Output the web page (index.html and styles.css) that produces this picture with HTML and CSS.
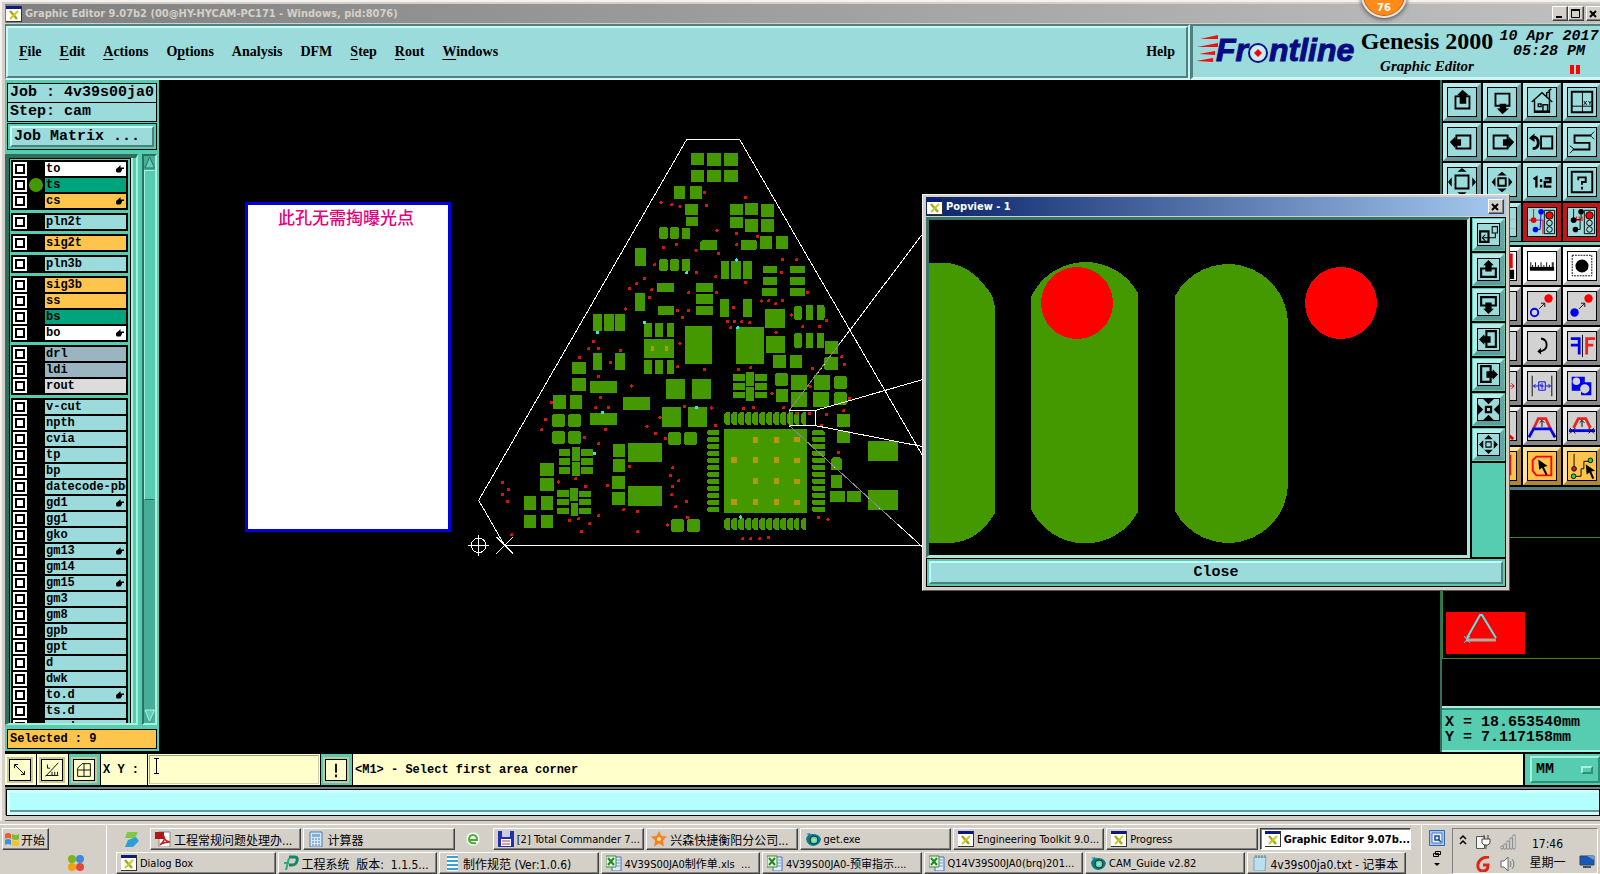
FILE: index.html
```
<!DOCTYPE html>
<html lang="en">
<head>
  <meta charset="UTF-8" />
  <meta name="viewport" content="width=device-width, initial-scale=1.0"/>
  <title>Graphic Editor 9.07b2</title>

  <link rel="stylesheet" href="styles.css">
</head>
<body>

  <!-- shared icons -->
  <svg class="defs" aria-hidden="true">
    <symbol id="xwin" viewBox="0 0 16 16"><path d="M0 0h16v16H0z" fill="#333"/><path d="M0 0h15v3H0z" fill="#0a1a80"/><path d="M0 3h15v12H0z" fill="#fff"/><path d="M4 5l7 8" stroke="#a8a820" stroke-width="2.500"/><path d="M12 5l-8 8" stroke="#c8c828" stroke-width="2"/></symbol>
    <symbol id="hand" viewBox="0 0 8 8"><path d="M0 4l2-1.500L4.500 0v2.500H8v1.500H6v1L4.500 7.500H1L0 6.500z"/></symbol>
    <symbol id="excel" viewBox="0 0 16 16"><path d="M6 2h9v14H6z" fill="#dfeafc" stroke="#4a73b8"/><path d="M10 5h4M10 8h4M10 11h4" stroke="#7da0d8"/><path d="M0 1h10v11H0z" fill="#e8f5e0" stroke="#3c8c3c"/><path d="M2 3l6 7M8 3l-6 7" stroke="#23862b" stroke-width="2"/></symbol>
    <symbol id="eye" viewBox="0 0 16 16"><path d="M1 3l4-1 1 3z" fill="#1797a5"/><path d="M1 8q1-5 7-5t8 5q-1 6-8 7-6-1-7-7z" fill="#087b87"/><circle cx="9" cy="9" r="4" fill="#4be0d0" stroke="#123"/><circle cx="9" cy="9" r="1.500" fill="#e8e030"/></symbol>
    <symbol id="up" viewBox="0 0 30 30"><path d="M8 9h15v13H8z" fill="none" stroke="#000" stroke-width="2"/><path d="M15.500 2l-6 6h3v9h7V8h3z"/></symbol>
    <symbol id="down" viewBox="0 0 30 30"><path d="M8 6h15v13H8z" fill="none" stroke="#000" stroke-width="2"/><path d="M15.500 28l-6-6h3v-5h7v5h3z"/></symbol>
    <symbol id="left" viewBox="0 0 30 30"><path d="M9 8h15v14H9z" fill="none" stroke="#000" stroke-width="2"/><path d="M2 15l6-6v3h6v7H8v3z"/></symbol>
    <symbol id="right" viewBox="0 0 30 30"><path d="M6 8h15v14H6z" fill="none" stroke="#000" stroke-width="2"/><path d="M28 15l-6-6v3h-6v7h6v3z"/></symbol>
    <symbol id="zoomout" viewBox="0 0 30 30"><path d="M8 8h14v14H8z" fill="none" stroke="#000" stroke-width="2"/><path d="M10 4h10l-5-4zM10 26h10l-5 4zM4 10v10l-4-5zM26 10v10l4-5z"/></symbol>
    <symbol id="zoomin" viewBox="0 0 30 30"><path d="M11 11h8v8h-8z" fill="none" stroke="#000" stroke-width="2"/><path d="M10 8h10l-5-4zM10 22h10l-5 4zM8 10v10l-4-5zM22 10v10l4-5z"/></symbol>
    <symbol id="popup-up" viewBox="0 0 20 20"><path d="M3 9h14v8H3z" fill="none" stroke="#000" stroke-width="2"/><path d="M10 1L5 6h2v6h6V6h2z"/></symbol>
    <symbol id="popup-in" viewBox="0 0 20 20"><path d="M7.500 7.500h5v5h-5z" fill="none" stroke="#000"/><path d="M6 5h8l-4-4zM6 15h8l-4 4zM5 6v8l-4-4zM15 6v8l4-4z"/></symbol>
  </svg>

  <div class="window">
    <div class="titlebar">
      <svg class="ico"><use href="#xwin"/></svg>
      <span class="title">Graphic Editor 9.07b2 (00@HY-HYCAM-PC171 - Windows, pid:8076)</span>
      <button class="winbtn" aria-label="Minimize"><svg width="12" height="12"><path d="M3 9h6" stroke="#000" stroke-width="2"/></svg></button>
      <button class="winbtn" aria-label="Maximize"><svg width="12" height="12"><path d="M2.500 2.500h8v7h-8z" fill="none" stroke="#000" stroke-width="1"/><path d="M2 2h9" stroke="#000" stroke-width="2"/></svg></button>
      <button class="winbtn last" aria-label="Close window"><svg width="12" height="12"><path d="M3 3l6 6M9 3l-6 6" stroke="#000" stroke-width="2"/></svg></button>
    </div>
    <div class="badge">76</div>

    <div class="header">
      <div class="menuframe">
        <nav class="menu">
          <a href="#"><u>F</u>ile</a>
          <a href="#"><u>E</u>dit</a>
          <a href="#"><u>A</u>ctions</a>
          <a href="#">O<u>p</u>tions</a>
          <a href="#">Analysis</a>
          <a href="#">DFM</a>
          <a href="#"><u>S</u>tep</a>
          <a href="#"><u>R</u>out</a>
          <a href="#"><u>W</u>indows</a>
          <a href="#" class="help">Help</a>
        </nav>
      </div>
      <div class="brand">
        <svg class="logo" viewBox="0 0 162 44">
          <path d="M4 9l18-4v4zM1 17l21-4v4zM3 24l16-3v4zM0 31l17-3v4z" fill="#f01010"/>
          <text x="20" y="31">Fr</text>
          <circle cx="62" cy="23" r="9" fill="#c8eef4" stroke="#101080" stroke-width="2"/>
          <path d="M62 19l4 4-4 4-4-4z" fill="#f00"/>
          <text x="73" y="31">ntline</text>
        </svg>
        <div class="product">
          <div class="genesis">Genesis 2000</div>
          <div class="sub">Graphic Editor</div>
        </div>
        <div class="clock">
          <div>10 Apr 2017</div>
          <div>05:28 PM</div>
          <svg class="pause" width="10" height="9"><path d="M0 0h4v9H0zM6 0h4v9H6z" fill="#f00"/></svg>
        </div>
      </div>
    </div>

    <div class="main">
      <aside class="side">
        <div class="jobline">Job : 4v39s00ja0</div>
        <div class="jobline">Step: cam</div>
        <div class="matrix"><button class="matrixbtn">Job Matrix ...</button></div>
        <div class="listwrap">
          <div class="listframe"><div class="list">
            <div class="group">
              <div class="layer"><input type="checkbox" id="l1"><i></i><label class="white" for="l1">to<svg><use href="#hand"/></svg></label></div>
              <div class="layer"><input type="checkbox" id="l2"><i class="on"></i><label class="green" for="l2">ts</label></div>
              <div class="layer"><input type="checkbox" id="l3"><i></i><label class="gold" for="l3">cs<svg><use href="#hand"/></svg></label></div>
            </div>
            <div class="group"><div class="layer"><input type="checkbox" id="l4"><i></i><label for="l4">pln2t</label></div></div>
            <div class="group"><div class="layer"><input type="checkbox" id="l5"><i></i><label class="gold" for="l5">sig2t</label></div></div>
            <div class="group"><div class="layer"><input type="checkbox" id="l6"><i></i><label for="l6">pln3b</label></div></div>
            <div class="group">
              <div class="layer"><input type="checkbox" id="l7"><i></i><label class="gold" for="l7">sig3b</label></div>
              <div class="layer"><input type="checkbox" id="l8"><i></i><label class="gold" for="l8">ss</label></div>
              <div class="layer"><input type="checkbox" id="l9"><i></i><label class="green" for="l9">bs</label></div>
              <div class="layer"><input type="checkbox" id="l10"><i></i><label class="white" for="l10">bo<svg><use href="#hand"/></svg></label></div>
            </div>
            <div class="group">
              <div class="layer"><input type="checkbox" id="l11"><i></i><label class="slate" for="l11">drl</label></div>
              <div class="layer"><input type="checkbox" id="l12"><i></i><label class="slate" for="l12">ldi</label></div>
              <div class="layer"><input type="checkbox" id="l13"><i></i><label class="grey" for="l13">rout</label></div>
            </div>
            <div class="group">
              <div class="layer"><input type="checkbox" id="l14"><i></i><label for="l14">v-cut</label></div>
              <div class="layer"><input type="checkbox" id="l15"><i></i><label for="l15">npth</label></div>
              <div class="layer"><input type="checkbox" id="l16"><i></i><label for="l16">cvia</label></div>
              <div class="layer"><input type="checkbox" id="l17"><i></i><label for="l17">tp</label></div>
              <div class="layer"><input type="checkbox" id="l18"><i></i><label for="l18">bp</label></div>
              <div class="layer"><input type="checkbox" id="l19"><i></i><label for="l19">datecode-pbo</label></div>
              <div class="layer"><input type="checkbox" id="l20"><i></i><label for="l20">gd1<svg><use href="#hand"/></svg></label></div>
              <div class="layer"><input type="checkbox" id="l21"><i></i><label for="l21">gg1</label></div>
              <div class="layer"><input type="checkbox" id="l22"><i></i><label for="l22">gko</label></div>
              <div class="layer"><input type="checkbox" id="l23"><i></i><label for="l23">gm13<svg><use href="#hand"/></svg></label></div>
              <div class="layer"><input type="checkbox" id="l24"><i></i><label for="l24">gm14</label></div>
              <div class="layer"><input type="checkbox" id="l25"><i></i><label for="l25">gm15<svg><use href="#hand"/></svg></label></div>
              <div class="layer"><input type="checkbox" id="l26"><i></i><label for="l26">gm3</label></div>
              <div class="layer"><input type="checkbox" id="l27"><i></i><label for="l27">gm8</label></div>
              <div class="layer"><input type="checkbox" id="l28"><i></i><label for="l28">gpb</label></div>
              <div class="layer"><input type="checkbox" id="l29"><i></i><label for="l29">gpt</label></div>
              <div class="layer"><input type="checkbox" id="l30"><i></i><label for="l30">d</label></div>
              <div class="layer"><input type="checkbox" id="l31"><i></i><label for="l31">dwk</label></div>
              <div class="layer"><input type="checkbox" id="l32"><i></i><label for="l32">to.d<svg><use href="#hand"/></svg></label></div>
              <div class="layer"><input type="checkbox" id="l33"><i></i><label for="l33">ts.d</label></div>
              <div class="layer"><input type="checkbox" id="l34"><i></i><label for="l34">cs.d</label></div>
            </div>
          </div></div>
          <div class="scroll">
            <svg width="11" height="14"><path d="M5.500 1l5 11H1z" fill="#5fd0b8" stroke="#2b6f60"/></svg>
            <div class="thumb"></div>
            <div class="trough"></div>
            <svg width="11" height="14"><path d="M5.500 12l5-11H1z" fill="#5fd0b8" stroke="#b0f0e0"/></svg>
          </div>
        </div>
        <div class="selected">Selected : 9</div>
      </aside>

      <div class="canvas">
        <svg class="board" viewBox="159 80 1281 672" preserveAspectRatio="xMinYMin meet">
          <path d="M246.500 203.500h203v327h-203z" fill="#fff" stroke="#0000e0" stroke-width="3"/>
          <text class="note" x="278" y="224">此孔无需掏曝光点</text>
          <!-- board drawing, three units to a pixel -->
          <svg x="450" y="130" width="480" height="440" viewBox="-60 0 1440 1320" shape-rendering="crispEdges">
            <g fill="#449800">
              <path d="M663 69h39v36h-39zM711 69h42v38h-42zM762 69h41v38h-41zM663 120h39v35h-39zM711 120h42v35h-42zM762 120h41v35h-41zM612 168h33v40h-33zM660 168h36v39h-36zM645 222h39v33h-39zM648 261h36v27h-36zM780 222h39v33h-39zM825 219h39v36h-39zM873 222h38v38h-38zM780 261h39v33h-39zM825 267h39v39h-39zM873 267h38v40h-38z"/>
              <path d="M571 291h19l4 4v27l-4 4h-19l-4-4v-27zM604 291h19l4 4v27l-4 4h-19l-4-4v-27zM636 294h24v32h-24zM697 330h44v30h-51v-22zM813 330h44l4 4v22l-4 4h-44zM870 318h36v38h-36zM918 318h36v38h-36zM495 354h33v54h-33zM571 387h19l4 4v27l-4 4h-19l-4-4v-27zM604 387h19l4 4v27l-4 4h-19l-4-4v-27zM636 387h24v36h-24zM753 393h24v54h-24zM783 393h30v54h-30zM819 393h27v54h-27z"/>
              <path d="M879 408h42v21h-42zM879 441h42v24h-42zM876 474h45v24h-45zM960 408h45v21h-45zM960 441h45v24h-45zM960 474h45v24h-45zM561 459h51v27h-51zM678 459h51v27h-51zM678 492h51v30h-51zM678 528h51v27h-51zM564 528h48v27h-48zM495 489h30v54h-30zM750 507h27v54h-27zM819 507h27v54h-27zM885 537h61v57h-61z"/>
              <path d="M976 528h16l4 4v34l-4 4h-16l-4-4v-34zM1008 525h21v45h-21zM1041 525h20l4 8v29l-4 8h-20zM369 552h27v50h-27zM402 552h30v50h-30zM435 552h30v50h-30zM522 579h24v42h-24zM555 579h24v42h-24zM591 579h21v42h-21zM522 627h90v57h-90zM645 588h81v114h-81zM798 591h85v111h-85zM888 618h57v51h-57zM976 609h16l4 4v37l-4 4h-16l-4-4v-37zM1008 609h21v45h-21zM1041 609h21v45h-21zM1065 633h39v38h-39z"/>
            </g>
            <path class="dots red" d="M573 218h0M606 225h0M630 229h0M704 187h0M710 227h0M826 203h0M741 302h0M799 310h0M862 320h0M801 345h0M745 371h0M581 352h0M619 344h0M678 361h0M555 405h0M680 427h0M524 445h0M738 441h0M501 462h0M478 475h0M546 480h0M538 503h0M657 489h0M739 487h0M826 457h0M934 427h0M937 389h0M981 390h0M1013 487h0M874 513h0M897 513h0M918 522h0M937 511h0M466 537h0M623 541h0M656 541h0M638 562h0M790 533h0M772 575h0M794 575h0M816 576h0M840 579h0M783 594h0M964 555h0M1069 571h0M1048 589h0M999 591h0M918 607h0"/>
            <path class="dots cyan" d="M651 429h0M799 390h0M523 578h0M383 607h0M804 594h0"/>
            <g transform="translate(0 630)">
              <g fill="#449800">
                <path d="M369 39h27v51h-27zM435 39h30v51h-30zM522 60h24v42h-24zM555 60h24v42h-24zM591 60h21v42h-21zM306 66h41v35h-41zM306 114h41v38h-41zM360 123h80v36h-80zM249 165h39v41h-39zM300 165h36v41h-36zM459 171h80v38h-80zM360 219h80v36h-80zM588 117h57v60h-57zM666 117h57v60h-57zM576 201h57v61h-57zM654 201h57v61h-57z"/>
                <path d="M598 276h31l4 4v30l-4 4h-31l-4-4v-30zM646 276h31l4 4v30l-4 4h-31l-4-4v-30zM250 222h31l4 4v31l-4 4h-31l-4-4v-31zM298 222h31l4 4v31l-4 4h-31l-4-4v-31zM250 273h31l4 4v30l-4 4h-31l-4-4v-30zM298 273h31l4 4v30l-4 4h-31l-4-4v-30zM909 45h39v39h-39zM960 45h36v39h-36zM1062 55l4-4h38v39h-38l-4-4z"/>
                <path d="M789 102h36v21h-36zM789 129h36v21h-36zM789 156h36v18h-36zM828 96h24v42h-24zM828 141h24v42h-24zM855 102h36v21h-36zM855 129h36v21h-36zM855 156h36v18h-36zM919 99h31l4 4v30l-4 4h-31l-4-4v-30zM918 147h36v39h-36zM963 105h48v45h-48zM1032 105h48v45h-48zM1096 108h31l4 4v31l-4 4h-31l-4-4v-31zM963 156h48v45h-48zM1029 156h48v45h-48zM1096 156h31l4 4v31l-4 4h-31l-4-4v-31z"/>
                <path d="M762 267h249v252h-249zM1101 222h39v39h-39zM1101 273h39v36h-39zM1194 303h90v60h-90zM1194 450h90v60h-90zM1083 359l8-8h18l7 8v31h-33zM1083 405h33v39h-33zM1080 453h45v33h-45zM1131 453h42v33h-42zM429 312h36v39h-36zM429 357h36v39h-36zM426 408h39v39h-39zM426 456h39v39h-39zM474 309h101v57h-101zM474 438h101v60h-101z"/>
                <path d="M267 327h33v21h-33zM267 354h33v21h-33zM267 381h33v21h-33zM306 321h24v42h-24zM306 366h24v42h-24zM333 327h36v21h-36zM333 354h36v21h-36zM333 381h36v21h-36zM210 369h42v39h-42zM210 414h42v39h-42zM162 468h36v42h-36zM213 468h36v42h-36zM162 525h36v39h-36zM213 525h36v39h-36zM261 450h36v21h-36zM261 477h36v18h-36zM261 504h36v18h-36zM300 444h24v39h-24zM303 488h21v40h-21zM327 453h36v18h-36zM327 477h36v18h-36zM327 504h36v18h-36zM607 537h31l4 4v31l-4 4h-31l-4-4v-31zM655 537h31l4 4v31l-4 4h-31l-4-4v-31z"/>
                <!-- pins round the big chip -->
                <path d="M762 222l6-6h12v39h-12l-6-6zM783 222l6-6h12v39h-12l-6-6zM804 222l6-6h12v39h-12l-6-6zM825 222l6-6h12v39h-12l-6-6zM846 222l6-6h12v39h-12l-6-6zM867 222l6-6h12v39h-12l-6-6zM888 222l6-6h12v39h-12l-6-6zM909 222l6-6h12v39h-12l-6-6zM930 222l6-6h12v39h-12l-6-6zM951 222l6-6h12v39h-12l-6-6zM972 222l6-6h9v39h-9l-6-6zM993 222l6-6h9v39h-9l-6-6z"/>
                <path d="M762 540l6-6h12v36h-12l-6-6zM783 540l6-6h12v36h-12l-6-6zM804 540l6-6h12v36h-12l-6-6zM825 540l6-6h12v36h-12l-6-6zM846 540l6-6h12v36h-12l-6-6zM867 540l6-6h12v36h-12l-6-6zM888 540l6-6h12v36h-12l-6-6zM909 540l6-6h12v36h-12l-6-6zM930 540l6-6h12v36h-12l-6-6zM951 540l6-6h12v36h-12l-6-6zM972 540l6-6h9v36h-9l-6-6zM993 540l6-6h9v36h-9l-6-6z"/>
                <path d="M711 275l6-5h30v15h-30l-6-5zM711 296l6-5h30v15h-30l-6-5zM711 317l6-5h30v15h-30l-6-5zM711 338l6-5h30v15h-30l-6-5zM711 359l6-5h30v15h-30l-6-5zM711 380l6-5h30v15h-30l-6-5zM711 401l6-5h30v15h-30l-6-5zM711 422l6-5h30v15h-30l-6-5zM711 443l6-5h30v15h-30l-6-5zM711 464l6-5h30v15h-30l-6-5zM711 485l6-5h30v15h-30l-6-5zM711 506l6-5h30v15h-30l-6-5z"/>
                <path d="M1026 275l6-5h26l6 5v10h-38zM1026 291h38v15h-32l-6-5zM1026 312h38v15h-32l-6-5zM1026 333h38v15h-32l-6-5zM1026 354h38v15h-32l-6-5zM1026 375h38v15h-32l-6-5zM1026 396h38v15h-32l-6-5zM1026 417h38v15h-32l-6-5zM1026 438h38v15h-32l-6-5zM1026 459h38v15h-32l-6-5zM1026 480h38v15h-32l-6-5zM1026 501h38v15h-32l-6-5z"/>
              </g>
              <path d="M848 290h16v18h-16zM911 290h16v18h-16zM972 291h18v16h-18zM784 352h18v18h-18zM848 352h16v18h-16zM911 352h16v18h-16zM972 353h18v16h-18zM848 415h16v18h-16zM911 415h16v18h-16zM972 416h18v16h-18zM784 478h18v18h-18zM848 478h16v18h-16zM911 478h16v18h-16zM972 479h18v16h-18zM542 19h10v15h-10zM584 19h10v15h-10z" fill="#b8960c"/>
              <path class="dots red" d="M370 4h0M385 25h0M357 27h0M451 32h0M422 67h0M328 53h0M630 10h0M624 81h0M703 89h0M386 109h0M484 138h0M391 172h0M378 204h0M416 202h0M245 188h0M226 239h0M216 270h0M406 269h0M387 312h0M343 292h0M531 259h0M556 280h0M570 232h0M586 296h0M643 200h0M724 204h0M736 256h0M806 88h0M843 84h0M906 160h0M820 206h0M851 202h0M942 204h0M980 221h0M1018 221h0M1028 85h0M1020 139h0M1116 51h0M1123 73h0M1138 175h0M1122 213h0M1070 223h0M1054 257h0M1105 337h0"/>
              <path class="dots red" d="M98 427h0M115 448h0M98 463h0M112 484h0M126 585h0M265 426h0M318 417h0M347 439h0M413 436h0M479 380h0M609 384h0M602 406h0M627 423h0M607 440h0M606 465h0M650 484h0M618 501h0M652 532h0M592 555h0M502 514h0M462 510h0M504 576h0M387 528h0M360 552h0M334 574h0M327 537h0M298 542h0M819 597h0M843 597h0M870 597h0M896 593h0M1045 532h0M1074 538h0"/>
              <path class="dots cyan" d="M398 217h0M679 202h0M374 340h0M811 531h0"/>
            </g>
            <g fill="none" stroke="#fff" stroke-width="3">
              <path d="M1375 1007L809 28.500H650L26 1111l78 135.500h1271"/>
              <path d="M958.500 841.500h78v46h-78zM958 841L1375 289M1037 841l338-97M1037 887l338 66M958 887l417 380"/>
              <path d="M79 1221l50 50M129 1221l-50 50M-6 1246h64M26 1214v64"/>
              <circle cx="26" cy="1246" r="22"/>
            </g>
            <path d="M958 843v44l325 296M958 841l150-199" fill="none" stroke="#888" stroke-width="3"/>
          </svg>
        </svg>
      </div>

      <aside class="tools">
        <div class="toolgrid">
          <button class="tool" aria-label="Pan up"><svg><use href="#up"/></svg></button>
          <button class="tool" aria-label="Pan down"><svg><use href="#down"/></svg></button>
          <button class="tool" aria-label="Home"><svg viewBox="0 0 30 30"><path d="M4 15L15 5l11 10M7 13v13h16V13M11 17h3v3h-3zM16 26v-8h5v8M20 9V5l3-1v8M22 3l3-2" fill="none" stroke="#000" stroke-width="1.500"/><path d="M7 25h16" stroke="#000" stroke-width="2"/></svg></button>
          <button class="tool" aria-label="Zoom XY"><svg viewBox="0 0 30 30"><path d="M4 4h22v22H4z" fill="none" stroke="#000" stroke-width="2"/><path d="M15.500 4v22M4 19.500h22M17 14l3 4M20 14l-3 4M22 14l1.500 2L25 14M23.500 16v2" fill="none" stroke="#000"/></svg></button>
          <button class="tool" aria-label="Pan left"><svg><use href="#left"/></svg></button>
          <button class="tool" aria-label="Pan right"><svg><use href="#right"/></svg></button>
          <button class="tool" aria-label="Previous view"><svg viewBox="0 0 30 30"><path d="M14 9h12v13H14z" fill="none" stroke="#000" stroke-width="2"/><path d="M4 10q7-1 7 6 0 6-6 6" fill="none" stroke="#000" stroke-width="3"/><path d="M7 5v9l-6-4z" transform="translate(0 1)"/></svg></button>
          <button class="tool" aria-label="Snake"><svg viewBox="0 0 30 30"><path d="M25 8H7v8h16v7H5" fill="none" stroke="#000" stroke-width="2"/><path d="M24 8l4-4M25 9l3 3M6 22l-4-3M6 23l-4 4" stroke="#000"/></svg></button>
          <button class="tool" aria-label="Zoom in"><svg><use href="#zoomout"/></svg></button>
          <button class="tool" aria-label="Zoom out"><svg><use href="#zoomin"/></svg></button>
          <button class="tool" aria-label="Scale 1:2"><svg viewBox="0 0 30 30"><path d="M6 12l3-2v11M14 12v3M14 18v3M18 11h6v4h-6v5h7" fill="none" stroke="#000" stroke-width="2.500"/></svg></button>
          <button class="tool" aria-label="Help"><svg viewBox="0 0 30 30"><path d="M4 4h22v22H4z" fill="none" stroke="#000" stroke-width="2"/><path d="M11 13v-3h8v5h-4v3M15 20v3" fill="none" stroke="#000" stroke-width="2"/></svg></button>
          <button class="tool" aria-label="Net"><svg></svg></button>
          <button class="tool" aria-label="Grid"><svg viewBox="0 0 30 30"><path d="M0 12h30M0 22h30" stroke="#b9b0b8"/></svg></button>
          <button class="tool hot" aria-label="Net colour"><svg viewBox="0 0 30 30"><path d="M6 1v12h10v15M1 13h5" stroke="#e00" fill="none"/><path d="M14 5l-1 18H8" stroke="#00e" fill="none"/><circle cx="6" cy="13" r="3" fill="#e00"/><circle cx="14" cy="4" r="3" fill="#00e"/><circle cx="8" cy="23" r="3" fill="#00e"/><path d="M17.500 2.500h11v25h-11z" fill="none" stroke="#000"/><circle cx="23" cy="8" r="4" fill="#f00" stroke="#000"/><circle cx="23" cy="16" r="3" fill="none" stroke="#000"/><circle cx="23" cy="23" r="3" fill="none" stroke="#000"/></svg></button>
          <button class="tool hot" aria-label="Net check"><svg viewBox="0 0 30 30"><path d="M6 1v12l8-1V4M8 23h5V12" stroke="#000" fill="none"/><path d="M9 9v4M12 9v4M15 9v4M8 13h8" stroke="#e00"/><circle cx="6" cy="13" r="3"/><circle cx="14" cy="4" r="3"/><circle cx="8" cy="23" r="3"/><path d="M17.500 2.500h11v25h-11z" fill="none" stroke="#000"/><circle cx="23" cy="8" r="4" fill="#f00" stroke="#000"/><circle cx="23" cy="16" r="3" fill="none" stroke="#000"/><circle cx="23" cy="23" r="3" fill="none" stroke="#000"/></svg></button>
        </div>
        <div class="toolgrid second">
          <button class="tool paper" aria-label="Select"><svg></svg></button>
          <button class="tool paper" aria-label="Contour"><svg viewBox="0 0 30 30"><path d="M14 3h11v13H14z" fill="none" stroke="#e00" stroke-width="3"/><path d="M10 19h18v10H10z"/></svg></button>
          <button class="tool paper" aria-label="Measure"><svg viewBox="0 0 30 30"><path d="M3 11v8h24v-8M5 14v5M8 11v8M11 14v5M14 11v8M17 14v5M20 11v8M23 14v5M26 11v8" stroke="#000" fill="none"/><path d="M2 16h26v4H2z"/></svg></button>
          <button class="tool paper" aria-label="Feature"><svg viewBox="0 0 30 30"><path d="M4.500 3.500h21v22h-21z" fill="none" stroke="#000" stroke-dasharray="2 1"/><circle cx="15" cy="15" r="7"/></svg></button>
          <button class="tool grey" aria-label="Delete"><svg></svg></button>
          <button class="tool grey" aria-label="Undo"><svg></svg></button>
          <button class="tool grey" aria-label="Copy"><svg viewBox="0 0 30 30"><circle cx="7" cy="22" r="4" fill="none" stroke="#00e" stroke-width="2"/><circle cx="22" cy="7" r="4.500" fill="#f00"/><path d="M12 18l5-5M14 12h4v4" fill="none" stroke="#000"/></svg></button>
          <button class="tool grey" aria-label="Move"><svg viewBox="0 0 30 30"><circle cx="7" cy="22" r="4.500" fill="#00e"/><circle cx="22" cy="7" r="4.500" fill="#f00"/><path d="M12 18l5-5M14 12h4v4" fill="none" stroke="#000"/></svg></button>
          <button class="tool grey" aria-label="Resize"><svg></svg></button>
          <button class="tool grey" aria-label="Shift"><svg></svg></button>
          <button class="tool grey" aria-label="Rotate"><svg viewBox="0 0 30 30"><path d="M14 7q6 1 6 7t-8 7" fill="none" stroke="#000" stroke-width="2"/><path d="M10 21l4-4v7z"/></svg></button>
          <button class="tool grey" aria-label="Mirror"><svg viewBox="0 0 30 30"><path d="M3 7h9v17M3 14h9" fill="none" stroke="#00e" stroke-width="3"/><path d="M15.500 3v24" stroke="#000"/><path d="M20 24V7h9M20 14h7" fill="none" stroke="#e22" stroke-width="3"/></svg></button>
          <button class="tool grey" aria-label="Stretch"><svg></svg></button>
          <button class="tool grey" aria-label="Break"><svg viewBox="0 0 30 30"><path d="M20 15h8M25 12l3 3-3 3" fill="none" stroke="#e00"/></svg></button>
          <button class="tool grey" aria-label="Spacing"><svg viewBox="0 0 30 30"><path d="M4.500 4v22M25.500 4v22" stroke="#000"/><path d="M6 15h5M19 15h5M8 13l-2 2 2 2M22 13l2 2-2 2M11.500 10.500h7v9h-7zM13 13v2h4M15 12v6" fill="none" stroke="#00e"/></svg></button>
          <button class="tool grey" aria-label="Merge"><svg viewBox="0 0 30 30"><path d="M4 5h14v6h7v14H14v-5H4z" fill="#00e"/><circle cx="9" cy="10" r="4" fill="#d2d2d2"/><circle cx="18" cy="18" r="5" fill="#d2d2d2"/></svg></button>
          <button class="tool grey" aria-label="Slide"><svg></svg></button>
          <button class="tool grey" aria-label="Line"><svg viewBox="0 0 30 30"><path d="M19 22l8 7" stroke="#e00" stroke-width="3"/></svg></button>
          <button class="tool grey" aria-label="Offset"><svg viewBox="0 0 30 30"><path d="M6 18l5-11h8l5 11" fill="none" stroke="#e22" stroke-width="3"/><path d="M1 27l5-9h18l5 9" fill="none" stroke="#00e" stroke-width="3"/><path d="M15 16v-7M12.500 11.500L15 9l2.500 2.500" fill="none" stroke="#000"/></svg></button>
          <button class="tool grey" aria-label="Trim"><svg viewBox="0 0 30 30"><path d="M6 17l5-10h8l5 10" fill="none" stroke="#e22" stroke-width="3"/><path d="M1 20h28" stroke="#00e" stroke-width="3"/><path d="M15 16v-7M12.500 11.500L15 9l2.500 2.500M2 17l6 6M8 17l-6 6M22 17l6 6M28 17l-6 6" fill="none" stroke="#000"/></svg></button>
          <button class="tool amber" aria-label="Pick"><svg></svg></button>
          <button class="tool amber" aria-label="Area"><svg viewBox="0 0 30 30"><path d="M23 3v22" stroke="#d02020" stroke-width="4"/></svg></button>
          <button class="tool amber" aria-label="Polygon select"><svg viewBox="0 0 30 30"><path d="M9 5h16v20H9l-4-5V9z" fill="none" stroke="#f00" stroke-width="2"/><path d="M11 8l1 11 3-2 4 8 2-1-4-8 4-1z"/></svg></button>
          <button class="tool amber" aria-label="Net select"><svg viewBox="0 0 30 30"><path d="M6.500 2v16M6 26h8v-8h3v-8h7" fill="none" stroke="#000"/><circle cx="6.500" cy="18" r="2.500" fill="#d02020" stroke="#000"/><circle cx="6" cy="26" r="2.500" fill="#2d2" stroke="#000"/><circle cx="24" cy="9" r="2.500" fill="#2d2" stroke="#000"/><path d="M19 13l1 11 3-2 3 7 2-1-3-7 4-1z"/></svg></button>
        </div>
        <div class="overview">
          <svg viewBox="0 0 158 216" preserveAspectRatio="xMinYMin meet">
            <path d="M0 47.500h158M0 168.500h158M.5 47v121" stroke="#3a8a20" fill="none"/>
            <path d="M4 122h79v42H4z" fill="#f00"/>
            <path d="M25 148l13-23h2l14 23" fill="none" stroke="#50e8e8" stroke-width="2"/>
            <path d="M24 150h30" stroke="#b0a8a0" stroke-width="3"/>
            <path d="M22 146l6 7M28 146l-6 7" stroke="#50e8e8"/>
          </svg>
        </div>
        <div class="coords">X = 18.653540mm<br>Y = 7.117158mm</div>
      </aside>

      <!-- floating zoom window -->
      <div class="popup">
        <div class="poptitle">
          <svg class="ico"><use href="#xwin"/></svg>
          <span class="title">Popview - 1</span>
          <button class="winbtn" aria-label="Close popview"><svg width="12" height="12"><path d="M3 3l6 6M9 3l-6 6" stroke="#000" stroke-width="2"/></svg></button>
        </div>
        <div class="popmain">
          <div class="view">
            <svg viewBox="929 220 538 335" shape-rendering="crispEdges">
              <g fill="#449800">
                <path d="M929 263h20q22 4 36 23 10 10 10 25v202q-17 29-45 30h-21z"/>
                <path d="M1031 297A60 60 0 0 1 1138 293V512A60 60 0 0 1 1031 509z"/>
                <path d="M1175 296A60 60 0 0 1 1288 323V484A60 60 0 0 1 1175 511z"/>
              </g>
              <circle cx="1077" cy="303" r="36" fill="#f00"/>
              <circle cx="1341" cy="303" r="36" fill="#f00"/>
            </svg>
          </div>
          <div class="poptools">
            <div><button class="tool small" aria-label="Locate"><svg viewBox="0 0 20 20"><path d="M2 7h8v10H2z" fill="none" stroke="#000" stroke-width="2"/><path d="M13.500 2.500h5v6h-5zM16.500 8v5H5M7 10l-3 3 3 3" fill="none" stroke="#000"/></svg></button></div>
            <div><button class="tool small" aria-label="View up"><svg><use href="#popup-up"/></svg></button></div>
            <div><button class="tool small" aria-label="View down"><svg viewBox="0 0 20 20"><path d="M3 3h14v8H3z" fill="none" stroke="#000" stroke-width="2"/><path d="M10 19l-5-5h2V8h6v6h2z"/></svg></button></div>
            <div><button class="tool small" aria-label="View left"><svg viewBox="0 0 20 20"><path d="M8 2h9v15H8z" fill="none" stroke="#000" stroke-width="2"/><path d="M1 10l5-5v2h6v6H6v2z"/></svg></button></div>
            <div><button class="tool small" aria-label="View right"><svg viewBox="0 0 20 20"><path d="M3 2h9v15H3z" fill="none" stroke="#000" stroke-width="2"/><path d="M19 10l-5-5v2H8v6h6v2z"/></svg></button></div>
            <div><button class="tool small" aria-label="View zoom in"><svg viewBox="0 0 20 20"><path d="M7.500 7.500h5v5h-5z" fill="none" stroke="#000" stroke-width="2"/><path d="M5 0h10l-5 5zM5 20h10l-5-5zM0 5v10l5-5zM20 5v10l-5-5z"/></svg></button></div>
            <div><button class="tool small" aria-label="View zoom out"><svg><use href="#popup-in"/></svg></button></div>
          </div>
        </div>
        <div class="popfoot"><button class="closebtn">Close</button></div>
      </div>
    </div>

    <div class="status">
      <button class="mode" aria-label="Snap"><svg viewBox="0 0 22 22"><path d="M5 5l11 11M5 9V5h4M12 16h4v-4" fill="none" stroke="#000"/></svg></button>
      <button class="mode" aria-label="Angle"><svg viewBox="0 0 22 22"><path d="M4 18L18 3M4 17h14M6 5v4h3M11 13v4M14 13v4M17 13v4" fill="none" stroke="#000"/></svg></button>
      <button class="mode teal" aria-label="Grid"><svg viewBox="0 0 22 22"><path d="M4 9l5-5h9v14H4zM11 4v14M4 11h14" fill="none" stroke="#000"/></svg></button>
      <label class="xylabel" for="xy">X Y :</label>
      <div class="xybox"><input id="xy" type="text"><svg class="ibeam" width="7" height="16"><path d="M1 .5h5M1 15.500h5M3.500 0v16" stroke="#000"/></svg></div>
      <button class="mode teal" aria-label="Alert"><svg viewBox="0 0 22 22"><path d="M11 4v10M11 16v3" stroke="#000" stroke-width="2"/></svg></button>
      <div class="message">&lt;M1&gt; - Select first area corner</div>
      <div class="units"><select aria-label="Units"><option>MM</option></select><i class="mark"></i></div>
    </div>
    <div class="hintframe"><div class="hint"></div></div>
  </div>

  <footer class="taskbar">
    <div class="startcol">
      <button class="start"><svg viewBox="0 0 16 16"><path d="M1 3q3-2 6 0v5q-3-2-6 0z" fill="#e8602c"/><path d="M8 3q4 2 7 0v5q-3 2-7 0z" fill="#7fba32"/><path d="M1 9q3-2 6 0v5q-3-2-6 0z" fill="#3a8fe0"/><path d="M8 9q4 2 7 0v5q-3 2-7 0z" fill="#f5c02c"/></svg>开始</button>
      <svg class="balls" viewBox="0 0 18 18"><circle cx="5" cy="5" r="4" fill="#7cb518"/><circle cx="13" cy="5" r="4" fill="#3c8ae0"/><circle cx="5" cy="13" r="4" fill="#f0a010"/><circle cx="13" cy="13" r="4" fill="#e04838"/></svg>
    </div>
    <div class="tasks">
      <div class="trow one">
        <span class="quick first"><svg viewBox="0 0 16 16"><path d="M3 1h11l-3 6H1z" fill="#7fc84a"/><path d="M4 9l8-3 3 4-6 6H1z" fill="#2aa0d8"/></svg></span>
        <button class="task cjk"><svg viewBox="0 0 16 16"><path d="M4 1h11v15H4z" fill="#fff" stroke="#888"/><path d="M0 1h9v7H0z" fill="#b01818"/><path d="M5 14q6-5 4-9 0 5 6 6-6 0-10 3" fill="none" stroke="#c02020" stroke-width="1.500"/></svg><span>工程常规问题处理办...</span></button>
        <button class="task cjk"><svg viewBox="0 0 16 16"><path d="M2 1h12v15H2z" fill="#d8e8f8" stroke="#4878b0"/><path d="M4 3h8v3H4z" fill="#78b0e8"/><path d="M4 8h8M4 11h8M4 14h8" stroke="#4878b0" stroke-dasharray="2 1"/></svg><span>计算器</span></button>
        <span class="quick"><svg viewBox="0 0 16 16"><circle cx="8" cy="8" r="7" fill="#fff" stroke="#c8e0c0"/><path d="M4 9h8q0-5-4-5T4 9q1 4 7 3" fill="none" stroke="#48b030" stroke-width="2"/></svg></span>
        <button class="task"><svg viewBox="0 0 16 16"><path d="M0 0h16v16H0z" fill="#2030b0"/><path d="M4 0h8v6H4z" fill="#c8d0e0"/><path d="M3 8h10v7H3z" fill="#fff"/><path d="M4 10h8M4 13h8" stroke="#d03030"/></svg><span>[2] Total Commander 7...</span></button>
        <button class="task cjk"><svg viewBox="0 0 16 16"><path d="M8 0l2.500 5 5.500.5-4 4 1 6-5-3-5 3 1-6-4-4L5.500 5z" fill="#f58220"/><circle cx="8" cy="8" r="2" fill="#ffe0a0"/></svg><span>兴森快捷衡阳分公司...</span></button>
        <button class="task"><svg><use href="#eye"/></svg><span>get.exe</span></button>
        <button class="task"><svg><use href="#xwin"/></svg><span>Engineering Toolkit 9.0...</span></button>
        <button class="task"><svg><use href="#xwin"/></svg><span>Progress</span></button>
        <button class="task active"><svg><use href="#xwin"/></svg><span>Graphic Editor 9.07b...</span></button>
      </div>
      <div class="trow two">
        <button class="task"><svg><use href="#xwin"/></svg><span>Dialog Box</span></button>
        <button class="task cjk"><svg viewBox="0 0 16 16"><path d="M6 2h6q3 0 2 4t-5 4H6" fill="none" stroke="#108868" stroke-width="3"/><path d="M6 3L3 15M1 8h5" stroke="#30a880" stroke-width="2"/></svg><span>工程系统&nbsp; 版本: &nbsp;1.1.5...</span></button>
        <button class="task cjk"><svg viewBox="0 0 16 16"><path d="M3 0h11v16H3z" fill="#f4fbff"/><path d="M3 2h11M3 6h11M3 10h11M3 14h11" stroke="#3aa0d8" stroke-width="2"/></svg><span>制作规范 (Ver:1.0.6)</span></button>
        <button class="task mixed"><svg><use href="#excel"/></svg><span>4V39S00JA0制作单.xls &nbsp;...</span></button>
        <button class="task mixed"><svg><use href="#excel"/></svg><span>4V39S00JA0-预审指示....</span></button>
        <button class="task mixed"><svg><use href="#excel"/></svg><span>Q14V39S00JA0(brq)201...</span></button>
        <button class="task"><svg><use href="#eye"/></svg><span>CAM_Guide v2.82</span></button>
        <button class="task cjk"><svg viewBox="0 0 16 16"><path d="M2 2h12l-1 14H2z" fill="#b8e0f0" stroke="#78a8c0"/><path d="M4 0v3M7 0v3M10 0v3M13 0v3" stroke="#678"/></svg><span>4v39s00ja0.txt - 记事本</span></button>
      </div>
    </div>
    <div class="lang">
      <svg width="16" height="16"><path d="M.5.5h15v15H.5z" fill="#a8c8f0" stroke="#3868a8"/><path d="M3 3h10v10H3z" fill="#e8f2ff" stroke="#4878b8"/><path d="M6 6h4v4H6zM9 9l3 3" fill="none" stroke="#204888" stroke-width="1.500"/></svg>
      <svg width="10" height="20"><path d="M3.500 2.500h5v3h-5zM1.500 4.500h5v3h-5z" fill="#d4d0c8" stroke="#000"/><path d="M2 14h6l-3 3z"/></svg>
    </div>
    <div class="tray">
      <svg width="8" height="12"><path d="M1 5l3-3 3 3M1 10l3-3 3 3" fill="none" stroke="#000" stroke-width="1.500"/></svg>
      <div class="trayicons">
        <svg viewBox="0 0 16 16"><path d="M1.500 2.500h8v12h-8z" fill="#f4f4f4" stroke="#555"/><path d="M7 5h8v4l-2 2h-4L7 9zM9 5V1M13 5V1M11 11v4" fill="#fff" stroke="#444"/></svg>
        <svg viewBox="0 0 16 16"><path d="M1 12h2v3H1zM4 10h2v5H4zM7 7h2v8H7zM10 4h2v11h-2zM13 1h2v14h-2z" fill="#fff" stroke="#666" stroke-width=".7"/></svg>
        <svg viewBox="0 0 16 16"><path d="M14 1Q5 1 3 8q-1 7 5 7 5 0 5-6H8" fill="none" stroke="#d82818" stroke-width="3"/></svg>
        <svg viewBox="0 0 16 16"><path d="M1 5h3l4-4v14l-4-4H1z" fill="#fff" stroke="#666"/><path d="M10 5q2 3 0 6M12 3q4 5 0 10" fill="none" stroke="#777"/></svg>
      </div>
      <div class="time">17:46<br>星期一</div>
      <svg class="monitor" width="16" height="14"><path d="M1 1h14v9H1z" fill="#1858b8" stroke="#345"/><path d="M8 1h7v4z" fill="#58a0f0"/><path d="M4 12h8" stroke="#456" stroke-width="2"/></svg>
    </div>
  </footer>

</body>
</html>
```
FILE: styles.css
```
* {
  box-sizing: border-box;
}

body {
  margin: 0;
  height: 100vh;
  display: flex;
  flex-direction: column;
  overflow: hidden;
  background: #d4d0c8;
  color: #000;
  font-family: 'Liberation Mono', monospace;
  font-size: 12px;
}

button, input, select {
  font: inherit;
  color: inherit;
  margin: 0;
  padding: 0;
  border-radius: 0;
}

svg {
  display: block;
}

.defs {
  position: absolute;
  width: 0;
  height: 0;
}

.window {
  flex: 1;
  min-height: 0;
  display: flex;
  flex-direction: column;
  padding: 4px 0 0 5px;
  box-shadow: inset 2px 2px 0 #f4f2ee;
}

/* title bars */
.titlebar, .poptitle {
  display: flex;
  align-items: center;
  height: 19px;
  margin-bottom: 1px;
  flex: none;
  font: bold 11px 'DejaVu Sans Condensed', 'Noto Sans', sans-serif;
}

.titlebar {
  margin-right: -2px;
  padding-left: 1px;
  background: linear-gradient(to right, #808080, #c0c0c0);
  color: #d4d0c8;
}

.ico {
  width: 16px;
  height: 16px;
}

.title {
  flex: 1;
  padding-left: 3px;
  white-space: nowrap;
}

.winbtn {
  width: 16px;
  height: 15px;
  background: #d4d0c8;
  border: 1px solid;
  border-color: #fff #404040 #404040 #fff;
  box-shadow: inset -1px -1px 0 #808080;
}

.winbtn.last {
  margin-left: 2px;
}

.badge {
  position: absolute;
  top: -28px;
  right: 193px;
  width: 46px;
  height: 46px;
  border: 2px solid #e8e4e0;
  border-radius: 50%;
  background: #ff8c1a;
  box-shadow: 0 1px 5px #444, inset 0 0 0 1px #b06010;
  color: #fff;
  font: bold 11px 'DejaVu Sans Condensed', sans-serif;
  text-align: center;
  padding-top: 27px;
}

/* menu and logo */
.header {
  display: flex;
  flex: none;
  height: 56px;
}

.menuframe {
  flex: 1;
  border: 2px solid;
  border-color: #4f7f7f #c8f4f4 #d0f6f6 #4f7f7f;
  border-left-width: 1px;
}

.menu {
  display: flex;
  align-items: center;
  gap: 18px;
  height: 100%;
  padding: 0 11px;
  background: #9bdbdb;
  border: 2px solid;
  border-color: #c8f8f8 #4f7f7f #4f7f7f #c8f8f8;
  font: bold 14px 'Liberation Serif', serif;
}

.menu a {
  color: #000;
  text-decoration: none;
}

.menu u {
  text-underline-offset: 3px;
}

.menu .help {
  margin-left: auto;
}

.brand {
  display: flex;
  width: 410px;
  background: #9bdbdb;
  border: 2px solid #4f7f7f;
  border-width: 2px 0 3px 3px;
  border-bottom-color: #d0f6f6;
  padding-left: 3px;
}

.logo {
  width: 162px;
  height: 44px;
  margin-top: 4px;
  fill: #0a0a82;
  font: italic bold 32px 'Liberation Sans', sans-serif;
}

.logo text {
  stroke: #0a0a82;
  stroke-width: 1px;
}

.product {
  width: 138px;
  text-align: center;
  font-family: 'Liberation Serif', serif;
  font-weight: bold;
  white-space: nowrap;
}

.genesis {
  font-size: 24px;
  line-height: 30px;
}

.sub {
  font-size: 15px;
  font-style: italic;
  line-height: 20px;
}

.clock {
  flex: 1;
  font: italic bold 15px/15px 'Liberation Mono', monospace;
  text-align: center;
  white-space: nowrap;
  padding: 3px 0 0 2px;
}

.pause {
  margin: 6px 20px 0 auto;
}

/* work area */
.main {
  position: relative;
  display: flex;
  flex: 1;
  min-height: 0;
  background: #000;
}

.side {
  width: 154px;
  display: flex;
  flex-direction: column;
  background: #56cdb0;
  padding: 3px 2px 2px;
  margin-bottom: 1px;
}

.jobline {
  height: 20px;
  margin-bottom: -1px;
  padding-left: 2px;
  border: 1px solid #000;
  background: #9bdbdb;
  font-size: 15px;
  font-weight: bold;
  line-height: 18px;
  white-space: nowrap;
}

.matrix {
  margin-top: 2px;
  height: 27px;
  padding: 2px;
  border: 1px solid #000;
}

.matrixbtn {
  display: block;
  width: 100%;
  height: 21px;
  padding-left: 2px;
  border: 2px solid;
  border-color: #c8f8f8 #4f7f7f #4f7f7f #c8f8f8;
  background: #9bdbdb;
  font-size: 15px;
  font-weight: bold;
  line-height: 17px;
  text-align: left;
}

.listwrap {
  display: flex;
  flex: 1;
  min-height: 0;
  margin: 4px 0 4px -2px;
}

.listframe {
  width: 133px;
  border: 4px solid;
  border-color: #2b6f60 #a8f0dc #a8f0dc #2b6f60;
  border-width: 4px 2px 2px 4px;
  padding-right: 5px;
  overflow: hidden;
}

.list {
  height: 100%;
  overflow: hidden;
  display: flex;
  flex-direction: column;
  gap: 3px;
  padding: 1px 2px 0 1px;
  border: 1px solid #000;
  border-width: 1px 1px 0;
  box-shadow: 2px 0 0 #a8f0dc;
}

.group {
  background: #000;
  padding: 1px 2px 1px 1px;
  flex: none;
}

.layer {
  display: flex;
  height: 16px;
  padding: 1px 0;
}

.layer input {
  appearance: none;
  width: 14px;
  height: 14px;
  margin-left: 1px;
  border: 2px solid #fff;
  background: #fff;
  box-shadow: inset 0 0 0 2px #000;
}

.layer i {
  width: 18px;
}

.layer .on {
  border-radius: 50%;
  width: 14px;
  margin: 0 2px;
  background: #449800;
}

.layer label {
  display: flex;
  flex: 1;
  justify-content: space-between;
  align-items: center;
  overflow: hidden;
  padding-left: 1px;
  background: #9bdbdb;
  font-weight: bold;
  line-height: 14px;
  white-space: nowrap;
}

.layer label svg {
  width: 8px;
  height: 8px;
  margin-right: 2px;
}

.layer .white { background: #fff; }
.layer .green { background: #00a47c; }
.layer .gold { background: #ffc44c; }
.layer .slate { background: #9ab4c0; }
.layer .grey { background: #dcdcdc; }

.scroll {
  display: flex;
  flex-direction: column;
  width: 15px;
  margin-left: 4px;
  background: #45ad98;
  border: 2px solid;
  border-color: #2b6f60 #a8f0dc #a8f0dc #2b6f60;
}

.thumb {
  flex: 61;
  background: #56cdb0;
  border: 1px solid;
  border-color: #a8f0dc #56cdb0 #2b6f60 #a8f0dc;
}

.trough {
  flex: 39;
}

.selected {
  height: 20px;
  padding-left: 2px;
  border: 1px solid #000;
  background: #ffc44c;
  font-weight: bold;
  line-height: 18px;
}

.canvas {
  flex: 1;
  min-width: 0;
  overflow: hidden;
}

.board {
  width: 100%;
  height: 100%;
}

.note {
  fill: #e6007e;
  font: 500 17px 'Noto Sans CJK SC', sans-serif;
}

.dots {
  stroke-width: 10;
  stroke-linecap: round;
}

.red { stroke: #d01818; }
.cyan { stroke: #30e8e8; }

/* tool buttons */
.tools {
  width: 160px;
  display: flex;
  flex-direction: column;
  overflow: hidden;
  border-left: 2px solid #2f6f60;
}

.toolgrid {
  display: grid;
  grid-template-columns: repeat(4, 38px);
  gap: 2px;
  padding: 3px 0 0 1px;
}

.toolgrid.second {
  margin-top: 1px;
  padding: 2px 0 2px 1px;
  border-top: 3px solid #78c8b8;
  border-bottom: 3px solid #4f7f7f;
}

.tool {
  width: 38px;
  height: 38px;
  border: 4px solid;
  border-color: #b8ecec #6aa4a4 #5f9c9c #b8ecec;
  background: #9bdbdb;
}

.tool svg {
  width: 30px;
  height: 30px;
  border: 1px solid #000;
}

.tool.hot {
  border-color: #c01818;
}

.tool.paper {
  background: #fff;
  border-color: #fff #b0b0b0 #b0b0b0 #fff;
}

.tool.grey {
  background: #d2d2d2;
  border-color: #f0f0f0 #888 #888 #f0f0f0;
}

.tool.amber {
  background: #ffc44c;
  border-color: #ffe4a0 #b08830 #b08830 #ffe4a0;
}

.tool.small {
  display: block;
  width: 31px;
  height: 31px;
}

.tool.small svg {
  width: 23px;
  height: 23px;
}

.overview {
  flex: 1;
  min-height: 0;
}

.overview svg {
  width: 100%;
  height: 100%;
}

.coords {
  height: 46px;
  padding: 7px 0 0 3px;
  background: #56cdb0;
  border: 2px solid #a8f0dc;
  border-width: 2px 0;
  box-shadow: inset 0 2px 0 #2f8f78;
  font-size: 15px;
  font-weight: bold;
  line-height: 15px;
  white-space: nowrap;
}

/* popview window */
.popup {
  position: absolute;
  top: 114px;
  right: 90px;
  width: 588px;
  padding: 2px 3px 3px;
  background: #d4d0c8;
  border: 1px solid;
  border-color: #f4f2ee #555 #555 #f4f2ee;
}

.poptitle {
  padding: 0 2px 0 1px;
  background: linear-gradient(to right, #0a246a, #a6caf0);
  color: #fff;
}

.popmain {
  display: flex;
  background: #000;
}

.view {
  flex: 1;
  border: 3px solid;
  border-color: #3a7468 #a8e8dc #a8e8dc #3a7468;
}

.view svg {
  width: 100%;
}

.poptools {
  width: 35px;
  margin-left: 1px;
  border: 1px solid #000;
  background: #56cdb0;
}

.poptools div {
  height: 35px;
  padding: 1px;
  border-bottom: 2px solid #000;
}

.popfoot {
  padding: 2px;
  border: 1px solid #000;
  background: #56cdb0;
}

.closebtn {
  display: block;
  width: 100%;
  height: 23px;
  border: 2px solid;
  border-color: #c8f8f8 #4f7f7f #4f7f7f #c8f8f8;
  background: #9bdbdb;
  font-size: 15px;
  font-weight: bold;
  line-height: 19px;
}

/* status line */
.status {
  display: flex;
  flex: none;
  height: 35px;
  padding: 2px 0;
  gap: 1px;
  background: #000;
  font-weight: bold;
}

.mode {
  width: 31px;
  background: #ffffcc;
  border: 4px solid #ffffcc;
}

.mode svg {
  width: 22px;
  height: 22px;
  border: 1px solid #000;
  outline: 2px solid #c8c8a0;
}

.mode.teal {
  border-color: #56cdb0;
}

.xylabel, .message {
  display: flex;
  align-items: center;
  background: #ffffcc;
}

.xylabel {
  width: 46px;
  padding-left: 2px;
  white-space: nowrap;
}

.xybox {
  position: relative;
  width: 172px;
}

.xybox input {
  display: block;
  width: 100%;
  height: 31px;
  background: #ffffcc;
  border: 2px solid;
  border-color: #a0a080 #d0d0a8 #d0d0a8 #a0a080;
  outline: 1px solid #ffffcc;
  outline-offset: -1px;
}

.ibeam {
  position: absolute;
  left: 5px;
  top: 4px;
}

.message {
  flex: 1;
  padding-left: 2px;
}

.units {
  position: relative;
  width: 75px;
  margin-left: 1px;
  padding: 2px 0 2px 5px;
  background: #56cdb0;
}

.units select {
  appearance: none;
  width: 70px;
  height: 27px;
  padding-left: 4px;
  border: 2px solid;
  border-color: #a8f0dc #2f8f78 #2f8f78 #a8f0dc;
  background: #56cdb0;
  font-size: 15px;
}

.mark {
  position: absolute;
  right: 7px;
  top: 12px;
  width: 12px;
  height: 8px;
  border: 2px solid;
  border-color: #a8f0dc #2f8f78 #2f8f78 #a8f0dc;
  pointer-events: none;
}

.hintframe {
  flex: none;
  height: 34px;
  padding: 2px 0 4px 1px;
  background: linear-gradient(#708888 28px, #d4d0c8 28px);
  border-bottom: 1px solid #606060;
}

.hint {
  height: 27px;
  border: 1px solid #000;
  background: #b3ffff;
  box-shadow: inset 3px 3px 0 #d0ffff, inset 0 -3px 0 #d0ffff, inset 0 -5px 0 #609898;
}

/* windows taskbar */
.taskbar {
  display: flex;
  flex: none;
  height: 53px;
  padding-top: 3px;
  background: linear-gradient(#d4d0c8 3px, #fff 3px, #fff 4px, #d4d0c8 4px);
  font: 11px 'DejaVu Sans Condensed', 'Noto Sans CJK SC', sans-serif;
}

.startcol {
  width: 107px;
  padding: 4px 0 0 2px;
  border-right: 1px solid #fff;
}

.start {
  display: flex;
  align-items: center;
  width: 47px;
  height: 22px;
  padding-left: 1px;
  gap: 1px;
  background: #d4d0c8;
  border: 1px solid;
  border-color: #fff #404040 #404040 #fff;
  box-shadow: inset -1px -1px 0 #808080;
  font-size: 12px;
  white-space: nowrap;
}

.start svg {
  width: 16px;
  height: 16px;
  flex: none;
}

.balls {
  width: 18px;
  height: 18px;
  margin: 4px 0 0 65px;
}

.tasks {
  flex: 1;
  min-width: 0;
  padding: 4px 10px 0 1px;
  border-right: 1px solid #fff;
}

.trow {
  display: flex;
  gap: 2px;
  margin-bottom: 2px;
}

.trow.two {
  padding: 0 5px 0 8px;
}

.quick {
  width: 34px;
  padding: 3px 0 0 8px;
}

.quick.first {
  width: 40px;
  padding-left: 16px;
}

.quick svg, .task svg {
  width: 16px;
  height: 16px;
  flex: none;
}

.task {
  display: flex;
  flex: 1;
  align-items: center;
  gap: 3px;
  min-width: 0;
  height: 22px;
  padding-left: 4px;
  background: #d4d0c8;
  border: 1px solid;
  border-color: #fff #404040 #404040 #fff;
  box-shadow: inset -1px -1px 0 #808080;
  white-space: nowrap;
}

.task.cjk {
  font-size: 12px;
}

.task.active {
  background: #fff;
  border-color: #404040 #fff #fff #404040;
  box-shadow: inset 1px 1px 0 #808080;
  font-weight: bold;
}

.lang {
  display: flex;
  flex-direction: column;
  align-items: center;
  gap: 3px;
  width: 30px;
  padding-top: 6px;
}

.tray {
  display: flex;
  width: 146px;
  margin: 4px 2px 0 0;
  padding: 5px 2px 0 6px;
  border: 1px solid;
  border-color: #808080 #fff #fff #808080;
}

.trayicons {
  display: grid;
  grid-template-columns: 16px 16px;
  gap: 6px 9px;
  align-content: start;
  margin-left: 8px;
}

.trayicons svg {
  width: 16px;
  height: 16px;
}

.time {
  flex: 1;
  padding-top: 1px;
  font-size: 12px;
  line-height: 19px;
  text-align: center;
}

.monitor {
  align-self: end;
  margin-bottom: 4px;
}
```
